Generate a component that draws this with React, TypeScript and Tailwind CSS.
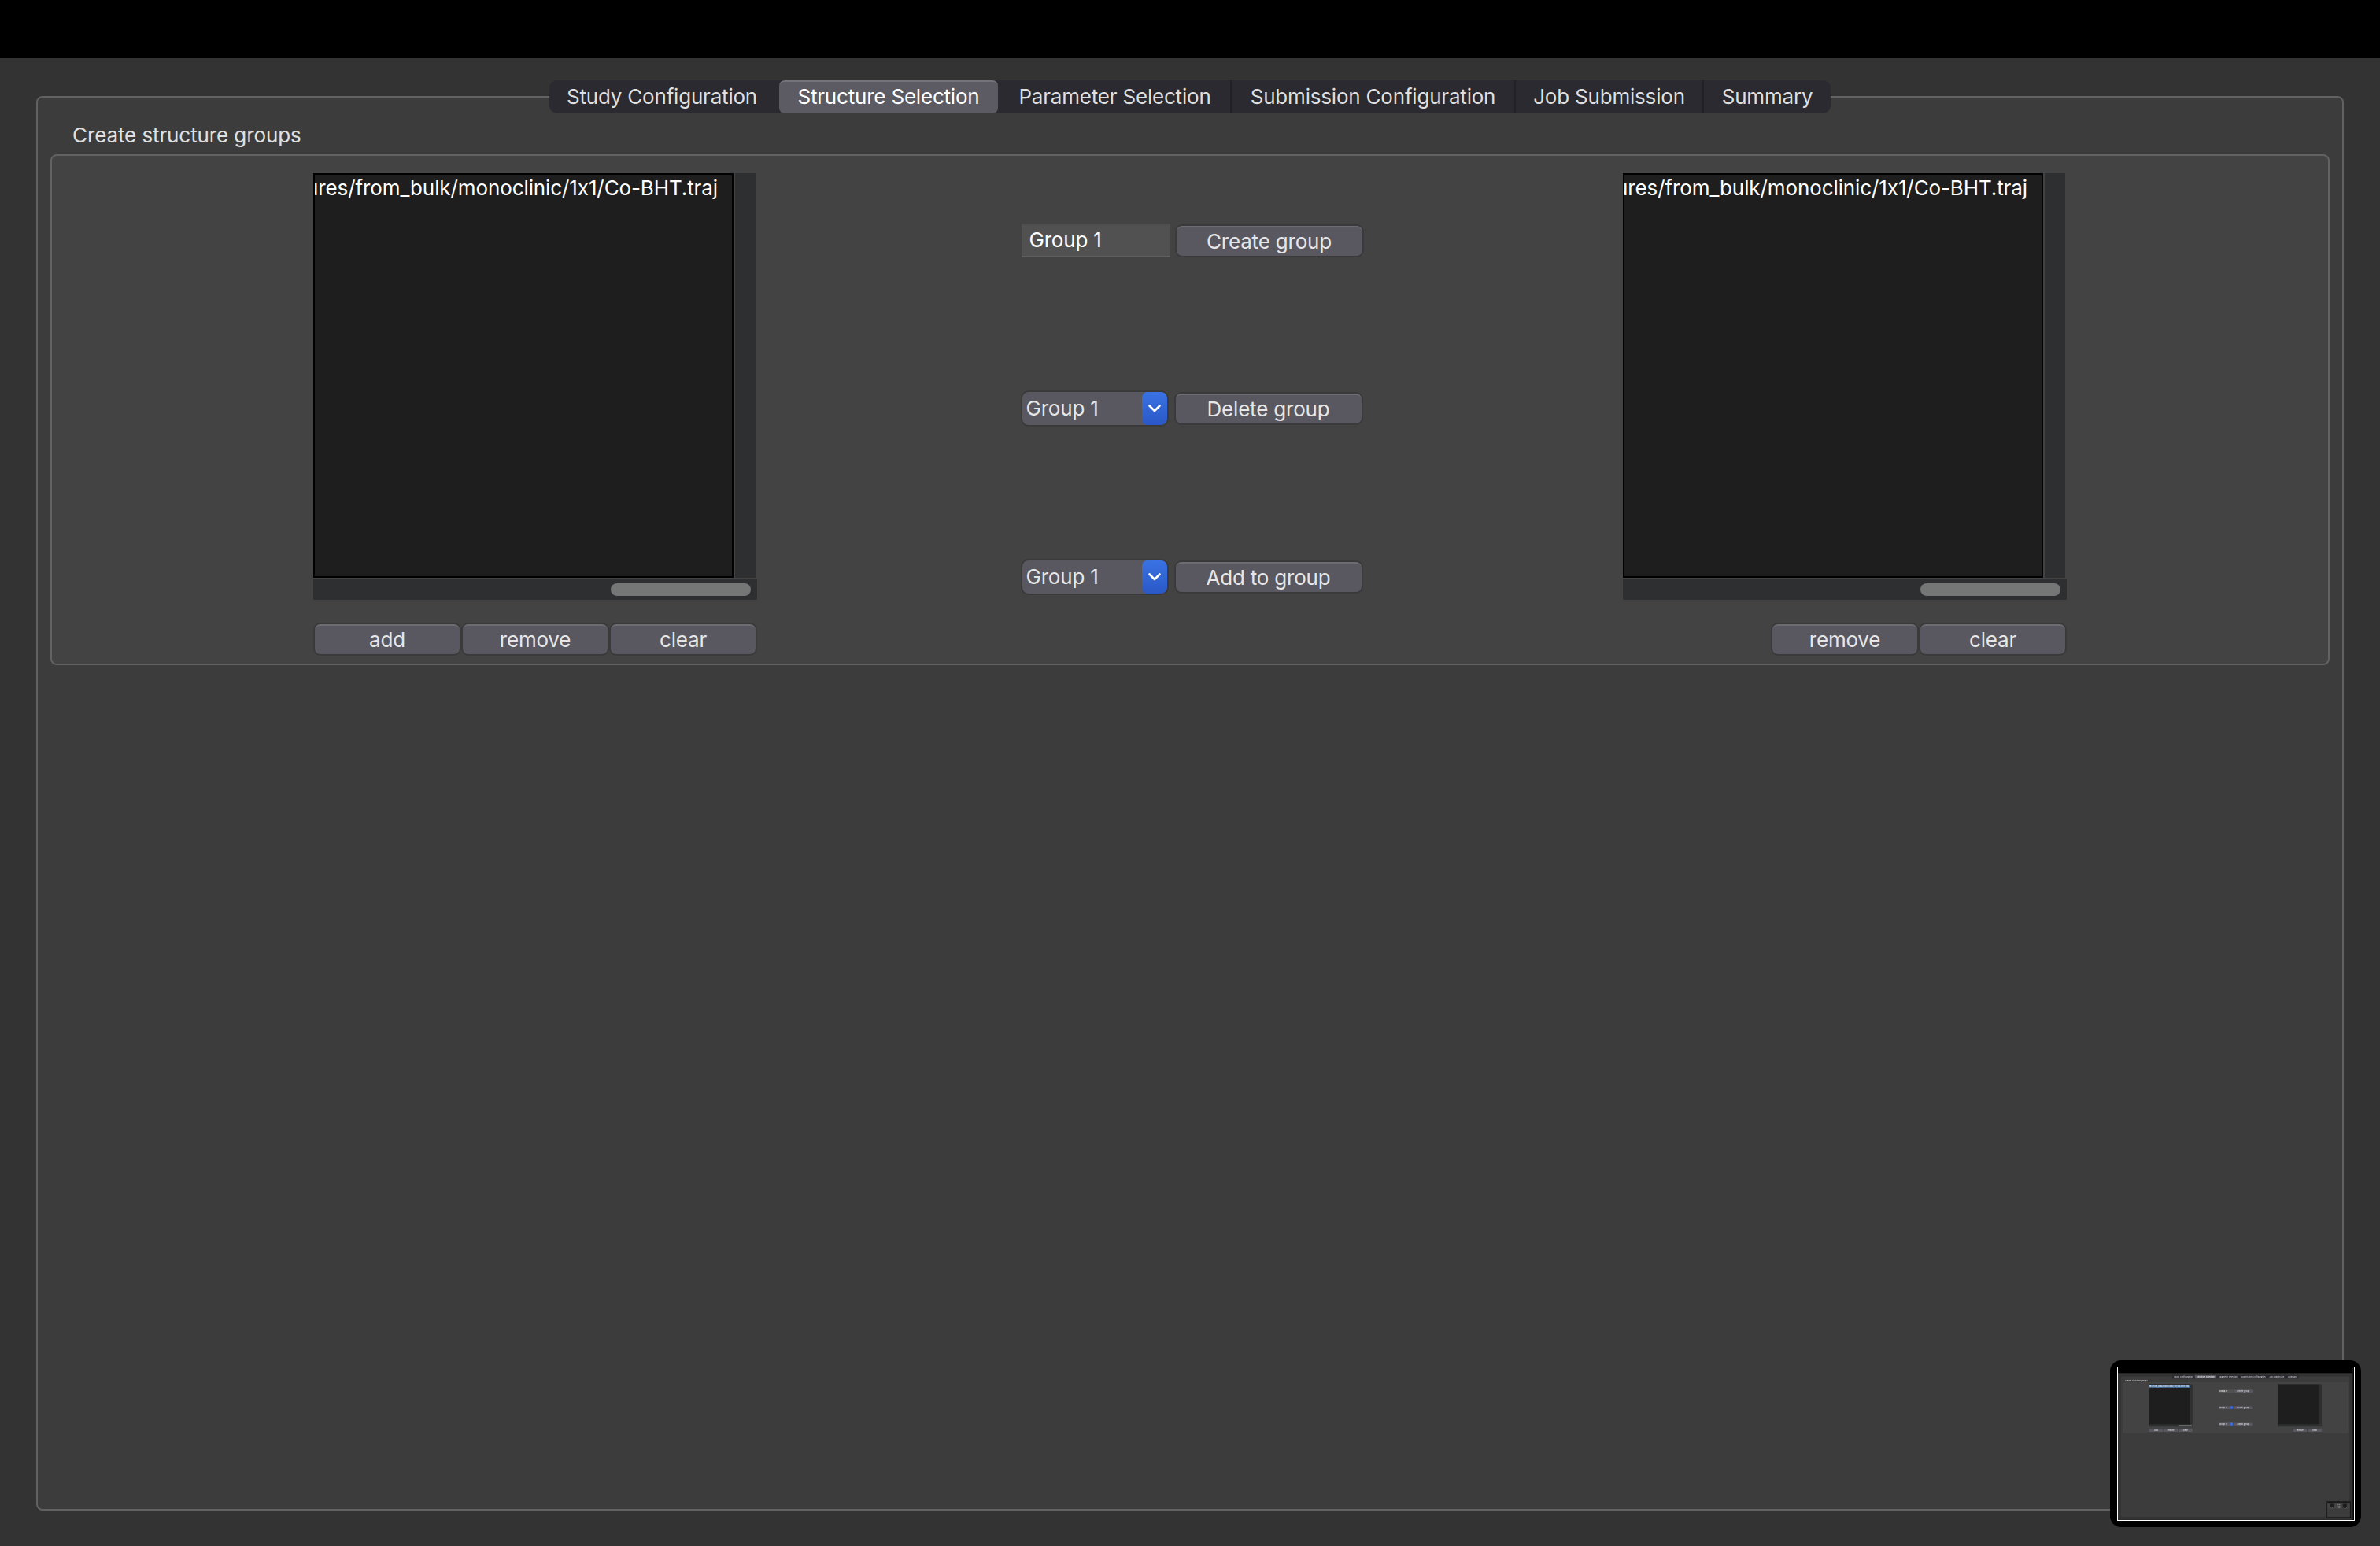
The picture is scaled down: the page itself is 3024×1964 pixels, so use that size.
import React from "react";

const font = { fontFamily: '"Inter", "Liberation Sans", sans-serif' };

function Btn({ label, w }: { label: string; w: string }) {
  return (
    <div
      className={`${w} h-[38px] flex items-center justify-center rounded-[7px] bg-[#59575f] border-t-2 border-t-[#6d6c72] text-[#e6e6e6] text-[26px] leading-none shadow-[0_0_0_2px_#3a3a3b] tracking-[-0.2px]`}
    >
      {label}
    </div>
  );
}

function Combo() {
  return (
    <div className="w-[184px] h-[42px] ml-[1px] mr-[3px] flex rounded-[8px] bg-[#59575f] shadow-[0_0_0_2px_#3a3a3b] overflow-hidden text-[#e6e6e6] text-[26px] leading-none">
      <div className="flex-1 flex items-center pl-[5px] tracking-[-0.2px]">Group 1</div>
      <div className="w-[32px] flex items-center justify-center rounded-[7px] bg-gradient-to-b from-[#3a72e4] to-[#2a58c6]">
        <svg width="18" height="12" viewBox="0 0 18 12" fill="none">
          <path d="M2.5 2.5 L9 9 L15.5 2.5" stroke="#ffffff" strokeWidth="2.6" strokeLinecap="round" strokeLinejoin="round" />
        </svg>
      </div>
    </div>
  );
}

function ListBox({ content, thumb }: { content: "text" | "selected" | "none"; thumb: string | null }) {
  return (
    <div className="w-[564px] flex flex-col gap-[2px]">
      <div className="flex gap-[2px] h-[514px] w-[562px]">
        <div className="flex-1 bg-[#1e1e1e] border-2 border-black overflow-hidden">
          {content !== "none" && (
            <div
              className={`flex justify-end items-center overflow-hidden whitespace-nowrap pr-[18px] text-white text-[26px] leading-none tracking-[-0.1px] ${
                content === "selected" ? "bg-[#47709f] h-[40px]" : "h-[34px]"
              }`}
            >
              structures/from_bulk/monoclinic/1x1/Co-BHT.traj
            </div>
          )}
        </div>
        <div className="w-[26px] bg-[#2e2f31]" />
      </div>
      <div className="h-[26px] bg-[#2e2f31] flex items-center justify-end pr-[8px]">
        {thumb && <div className={`${thumb} h-[16px] rounded-full bg-[#757777]`} />}
      </div>
    </div>
  );
}

function Screen({ level }: { level: number }) {
  const tabs: [string, string][] = [
    ["Study Configuration", "w-[290px] mr-[2px] pr-[4px]"],
    ["Structure Selection", "w-[278px] mr-[2px]"],
    ["Parameter Selection", "w-[295px]"],
    ["Submission Configuration", "w-[361px]"],
    ["Job Submission", "w-[239px]"],
    ["Summary", "w-[161px]"],
  ];
  const leftContent = level === 0 ? "text" : level === 1 ? "selected" : "none";
  const rightContent = level === 0 ? "text" : "none";
  return (
    <div className="relative w-[3024px] h-[1964px] flex flex-col bg-[#333333] overflow-hidden" style={font}>
      <div className="h-[74px] bg-black shrink-0" />
      <div className="flex-1 flex flex-col pt-[48px] px-[46px] pb-[45px] min-h-0">
        <div className="flex-1 flex flex-col border-2 border-[#626262] rounded-[8px] bg-[#3c3c3c] px-[16px] min-h-0">
          <div className="flex justify-center -mt-[22px] -mx-[2px]">
            <div className="flex h-[42px] rounded-[10px] bg-[#2a2a30] overflow-hidden text-[#dfdfdf] text-[26px] leading-none tracking-[-0.2px]">
              {tabs.map(([t, w], i) => (
                <div
                  key={t}
                  className={`${w} flex items-center justify-center ${
                    i === 1
                      ? "bg-[#5c5b63] border-t-2 border-t-[#74737a] rounded-[7px] text-white pb-[2px]"
                      : i < 5 && i !== 0
                        ? "border-r-2 border-r-[#212126]"
                        : ""
                  }`}
                >
                  {t}
                </div>
              ))}
            </div>
          </div>
          <div className="h-[52px] flex items-center pl-[28px] pt-[4px] text-[#e0e0e0] text-[26px] leading-none tracking-[-0.1px]">
            Create structure groups
          </div>
          <div className="h-[649px] border-2 border-[#626262] rounded-[8px] bg-[#434343] flex justify-between pl-[332px] pr-[332px] pt-[22px]">
            <div className="flex flex-col">
              <ListBox content={leftContent} thumb={level < 2 ? "w-[178px]" : null} />
              <div className="flex gap-[4px] pl-[2px] mt-[31px]">
                <Btn label="add" w="w-[184px]" />
                <Btn label="remove" w="w-[184px]" />
                <Btn label="clear" w="w-[184px]" />
              </div>
            </div>
            <div className="w-[437px] flex flex-col pl-[4px] pt-[64px] gap-[172px]">
              <div className="h-[42px] flex items-center gap-[8px]">
                <div className="w-[189px] h-[43px] flex items-center pl-[10px] bg-[#515151] border-b-2 border-b-[#5f5f5f] border-t-2 border-t-[#4c4c4c] text-white text-[26px] leading-none tracking-[-0.2px]">
                  Group 1
                </div>
                <div className="mt-[2px]">
                  <Btn label="Create group" w="w-[236px]" />
                </div>
              </div>
              <div className="h-[42px] flex items-center gap-[8px]">
                <Combo />
                <Btn label="Delete group" w="w-[236px]" />
              </div>
              <div className="h-[42px] flex items-center gap-[8px]">
                <Combo />
                <Btn label="Add to group" w="w-[236px]" />
              </div>
            </div>
            <div className="flex flex-col">
              <ListBox content={rightContent} thumb={level === 0 ? "w-[178px]" : null} />
              <div className="flex justify-end gap-[4px] pr-[2px] mt-[31px]">
                <Btn label="remove" w="w-[184px]" />
                <Btn label="clear" w="w-[184px]" />
              </div>
            </div>
          </div>
        </div>
      </div>
      {level < 2 && (
        <div className="absolute left-[2681px] top-[1728px] w-[319px] h-[212px] bg-black rounded-[14px] flex items-center justify-center">
          <div className="w-[302px] h-[196px] border-[1.5px] border-white overflow-hidden relative">
            <div className="absolute left-0 top-0 origin-top-left scale-[0.0987] blur-[4px]">
              <Screen level={level + 1} />
            </div>
          </div>
        </div>
      )}
    </div>
  );
}

export default function App() {
  return <Screen level={0} />;
}
